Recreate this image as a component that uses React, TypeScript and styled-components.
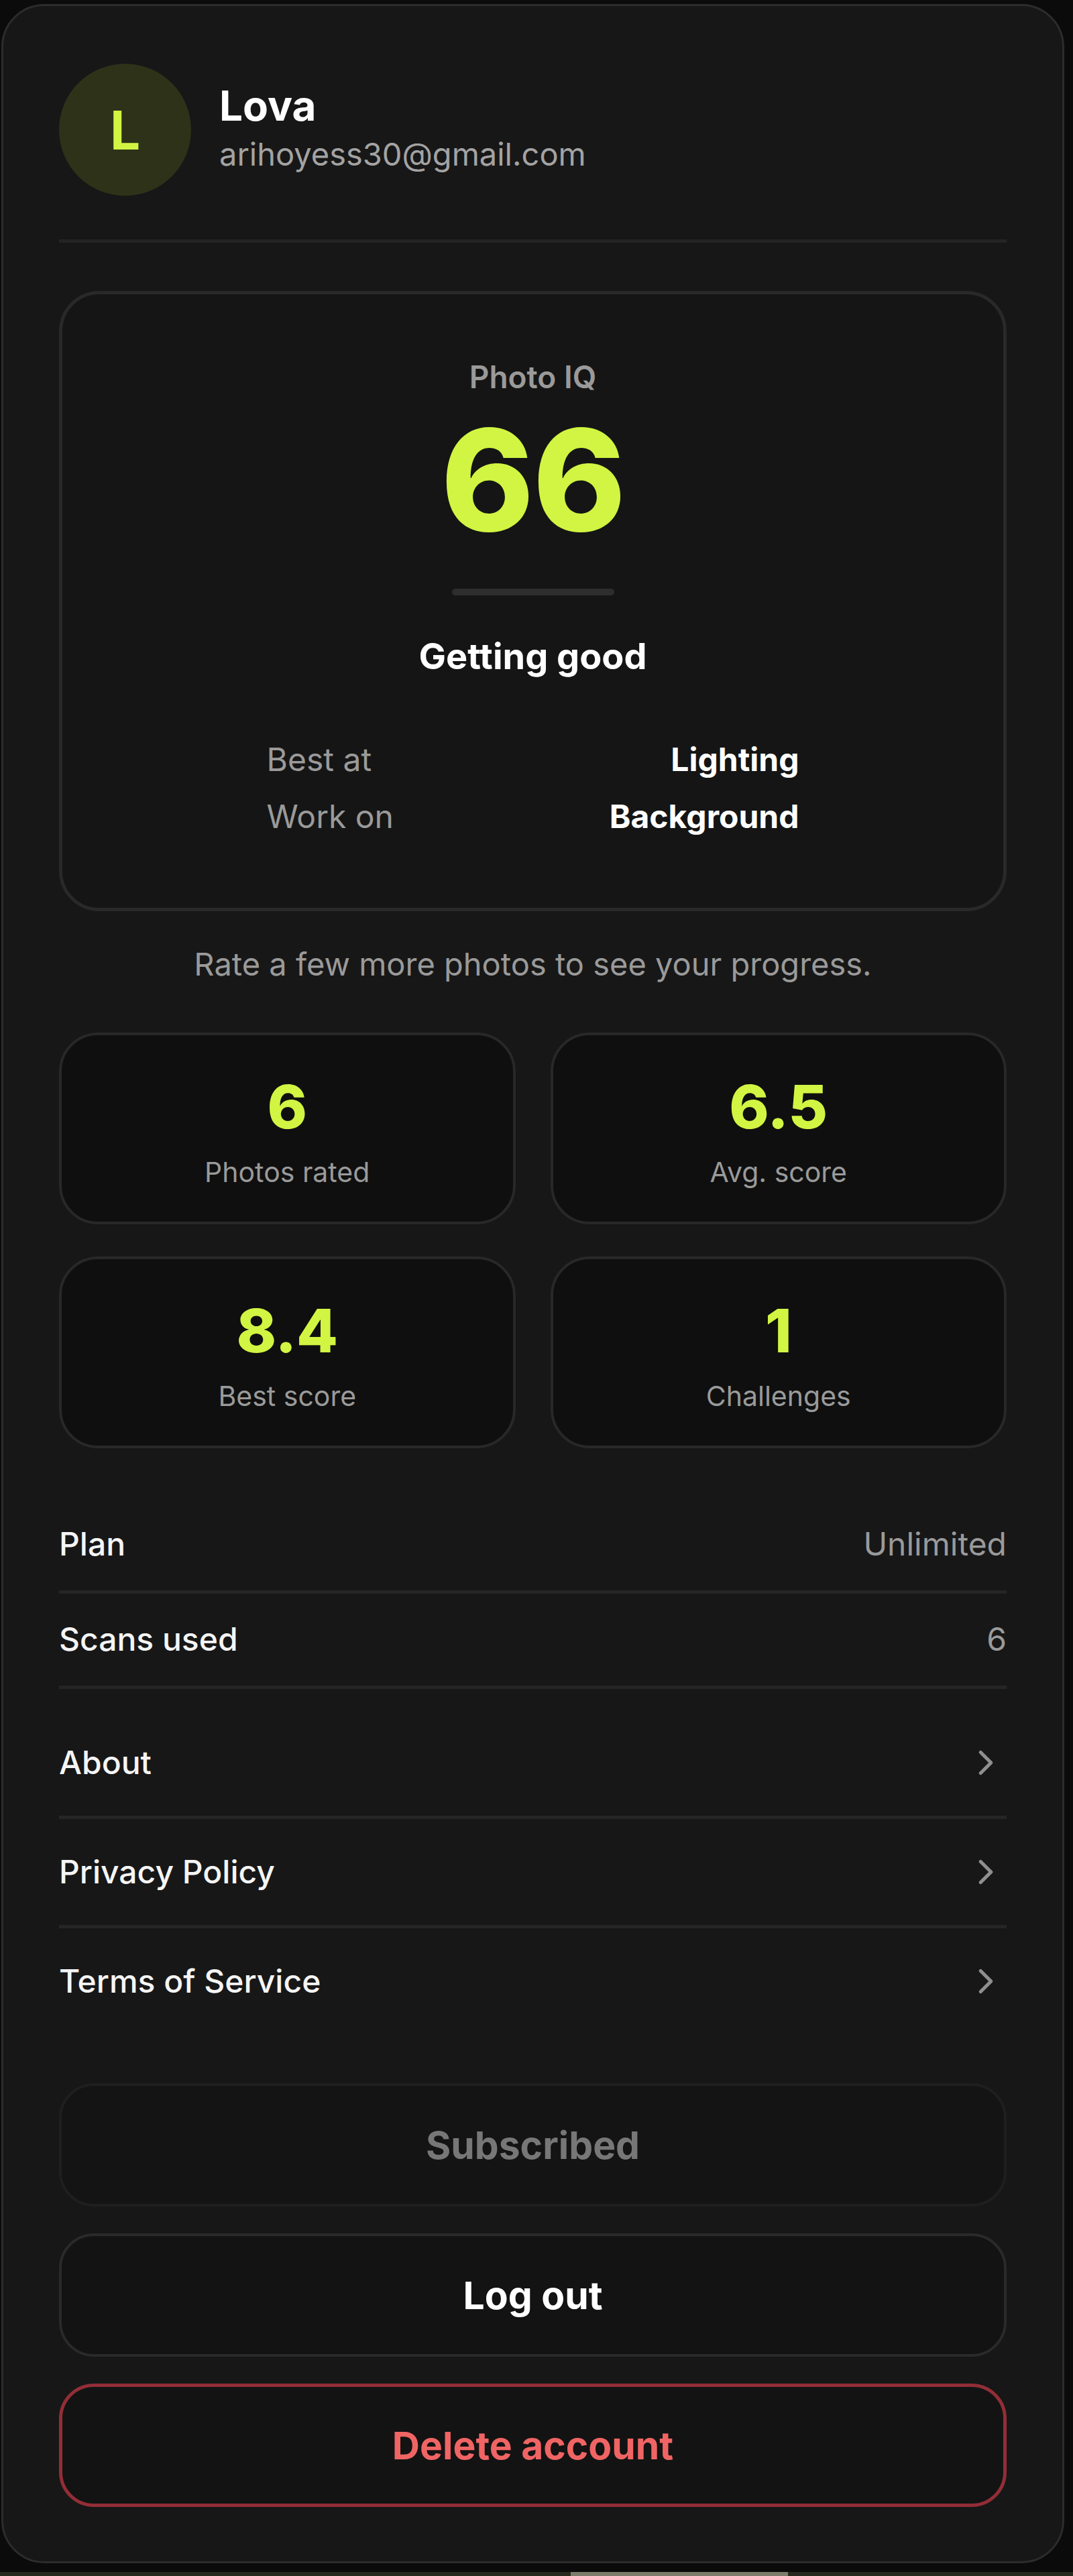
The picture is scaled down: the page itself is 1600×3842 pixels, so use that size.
import React from "react";
import styled, { createGlobalStyle } from "styled-components";
import { ChevronRight } from "lucide-react";

const LIME = "#d1f542";
const MUTED = "#9a9a9a";

const Global = createGlobalStyle`
  *, *::before, *::after { box-sizing: border-box; }
  html, body { margin: 0; padding: 0; background: #0b0b0b; }
  body { font-family: Inter, "Noto Sans", "Liberation Sans", sans-serif; color: #fff; }
`;

const Page = styled.div`
  padding: 6px 0 0 2px;
  width: 1600px;
`;

const Panel = styled.main`
  width: 1585px;
  background: #171717;
  border: 3px solid #2c2c2c;
  border-radius: 64px;
  padding: 86px 83px 81px 83px;
  display: flex;
  flex-direction: column;
`;

const Header = styled.header`
  display: flex;
  align-items: center;
  gap: 42px;
  padding-bottom: 65px;
  border-bottom: 5px solid #242424;
`;

const Avatar = styled.div`
  width: 197px;
  height: 197px;
  border-radius: 50%;
  background: #2d3219;
  color: ${LIME};
  font-size: 80px;
  font-weight: 700;
  display: flex;
  align-items: center;
  justify-content: center;
  flex-shrink: 0;
`;

const Identity = styled.div`
  display: flex;
  flex-direction: column;
`;

const Name = styled.div`
  font-size: 62px;
  font-weight: 700;
  line-height: 72px;
  color: #ffffff;
`;

const Email = styled.div`
  font-size: 47px;
  line-height: 72px;
  color: #a3a3a3;
`;

const IQCard = styled.section`
  margin-top: 72px;
  border: 5px solid #292929;
  border-radius: 60px;
  background: #151515;
  padding: 95px 0 94px;
  display: flex;
  flex-direction: column;
  align-items: center;
`;

const IQLabel = styled.div`
  font-size: 46px;
  line-height: 56px;
  font-weight: 600;
  color: ${MUTED};
`;

const IQValue = styled.div`
  margin-top: 21px;
  font-size: 210px;
  line-height: 210px;
  font-weight: 800;
  color: ${LIME};
  letter-spacing: -2px;
`;

const IQBar = styled.div`
  margin-top: 57px;
  width: 242px;
  height: 10px;
  border-radius: 5px;
  background: #2e2e2e;
`;

const Verdict = styled.div`
  margin-top: 58px;
  font-size: 54px;
  line-height: 66px;
  font-weight: 700;
  color: #fff;
`;

const Traits = styled.div`
  margin-top: 78px;
  width: 794px;
  display: flex;
  flex-direction: column;
`;

const TraitRow = styled.div`
  display: flex;
  justify-content: space-between;
  font-size: 48px;
  line-height: 85px;
`;

const TraitLabel = styled.span`
  color: ${MUTED};
`;

const TraitValue = styled.span`
  color: #fff;
  font-weight: 700;
`;

const Hint = styled.p`
  margin: 50px 0 0;
  text-align: center;
  font-size: 47px;
  line-height: 58px;
  color: ${MUTED};
`;

const StatGrid = styled.div`
  margin-top: 73px;
  display: grid;
  grid-template-columns: 1fr 1fr;
  column-gap: 52px;
  row-gap: 48px;
`;

const StatCard = styled.div`
  height: 286px;
  border: 4px solid #282828;
  border-radius: 58px;
  background: #0f0f0f;
  display: flex;
  flex-direction: column;
  align-items: center;
  justify-content: center;
  gap: 27px;
  padding-top: 12px;
`;

const StatValue = styled.div`
  font-size: 90px;
  line-height: 90px;
  font-weight: 800;
  color: ${LIME};
`;

const StatLabel = styled.div`
  font-size: 41px;
  line-height: 50px;
  color: ${MUTED};
`;

const InfoList = styled.div`
  margin-top: 75px;
  display: flex;
  flex-direction: column;
`;

const InfoRow = styled.div`
  display: flex;
  justify-content: space-between;
  align-items: center;
  padding: 39px 0 40px;
  border-bottom: 5px solid #252525;
  font-size: 48px;
  line-height: 58px;
`;

const LinkList = styled.nav`
  margin-top: 31px;
  display: flex;
  flex-direction: column;
`;

const LinkRow = styled.div<{ $last?: boolean }>`
  display: flex;
  justify-content: space-between;
  align-items: center;
  padding: 50px 0;
  border-bottom: ${(p) => (p.$last ? "none" : "5px solid #252525")};
  font-size: 48px;
  line-height: 58px;
  cursor: pointer;
`;

const RowLabel = styled.span`
  color: #f5f5f5;
  font-weight: 500;
`;

const RowValue = styled.span`
  color: ${MUTED};
`;

const ChevronBox = styled.span`
  display: flex;
  height: 58px;
  align-items: center;
  color: #8f8f8f;
`;

const Actions = styled.div`
  margin-top: 73px;
  display: flex;
  flex-direction: column;
  gap: 40px;
`;

type Variant = "muted" | "default" | "danger";

const ActionButton = styled.button<{ $variant: Variant }>`
  height: 184px;
  width: 100%;
  border-radius: 52px;
  font-family: inherit;
  font-size: 57px;
  font-weight: 700;
  background: ${(p) => (p.$variant === "muted" ? "#141414" : "#131313")};
  border: ${(p) =>
    p.$variant === "danger"
      ? "5px solid #922e36"
      : p.$variant === "muted"
      ? "4px solid #1f1f1f"
      : "4px solid #2a2a2a"};
  color: ${(p) =>
    p.$variant === "danger" ? "#f06464" : p.$variant === "muted" ? "#777777" : "#ffffff"};
  cursor: pointer;
`;

const ScrollTrack = styled.div`
  margin-top: 13px;
  height: 6px;
  width: 1600px;
  margin-left: -2px;
  background: #262a1e;
  display: flex;
`;

const ScrollThumb = styled.div`
  margin-left: 851px;
  width: 324px;
  height: 100%;
  background: #7c7c6c;
`;

const stats = [
  { value: "6", label: "Photos rated" },
  { value: "6.5", label: "Avg. score" },
  { value: "8.4", label: "Best score" },
  { value: "1", label: "Challenges" },
];

const links = ["About", "Privacy Policy", "Terms of Service"];

export default function App() {
  return (
    <>
      <Global />
      <Page>
        <Panel>
          <Header>
            <Avatar>L</Avatar>
            <Identity>
              <Name>Lova</Name>
              <Email>arihoyess30@gmail.com</Email>
            </Identity>
          </Header>

          <IQCard>
            <IQLabel>Photo IQ</IQLabel>
            <IQValue>66</IQValue>
            <IQBar />
            <Verdict>Getting good</Verdict>
            <Traits>
              <TraitRow>
                <TraitLabel>Best at</TraitLabel>
                <TraitValue>Lighting</TraitValue>
              </TraitRow>
              <TraitRow>
                <TraitLabel>Work on</TraitLabel>
                <TraitValue>Background</TraitValue>
              </TraitRow>
            </Traits>
          </IQCard>

          <Hint>Rate a few more photos to see your progress.</Hint>

          <StatGrid>
            {stats.map((s) => (
              <StatCard key={s.label}>
                <StatValue>{s.value}</StatValue>
                <StatLabel>{s.label}</StatLabel>
              </StatCard>
            ))}
          </StatGrid>

          <InfoList>
            <InfoRow>
              <RowLabel>Plan</RowLabel>
              <RowValue>Unlimited</RowValue>
            </InfoRow>
            <InfoRow>
              <RowLabel>Scans used</RowLabel>
              <RowValue>6</RowValue>
            </InfoRow>
          </InfoList>

          <LinkList>
            {links.map((l, i) => (
              <LinkRow key={l} $last={i === links.length - 1}>
                <RowLabel>{l}</RowLabel>
                <ChevronBox>
                  <ChevronRight size={62} strokeWidth={2} />
                </ChevronBox>
              </LinkRow>
            ))}
          </LinkList>

          <Actions>
            <ActionButton $variant="muted">Subscribed</ActionButton>
            <ActionButton $variant="default">Log out</ActionButton>
            <ActionButton $variant="danger">Delete account</ActionButton>
          </Actions>
        </Panel>
        <ScrollTrack>
          <ScrollThumb />
        </ScrollTrack>
      </Page>
    </>
  );
}
